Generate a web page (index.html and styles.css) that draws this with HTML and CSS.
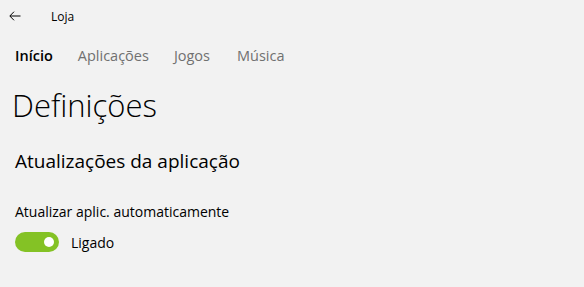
FILE: index.html
```html
<!DOCTYPE html>
<html lang="pt">

<head>
  <meta charset="UTF-8" />
  <title>Loja</title>
  <link rel="stylesheet" href="styles.css">
</head>

<body>
  <div class="app">

    <!-- barra de título -->
    <div class="titlebar">
      <span class="back">
        <svg width="12" height="10" viewBox="0 0 12 10">
          <path d="M11.5 5H1M5 0.7L0.8 5 5 9.3" fill="none" stroke="#000" stroke-width="1" />
        </svg>
      </span>
      <span class="title">Loja</span>
    </div>

    <!-- navegação -->
    <ul class="tabs">
      <li class="active">Início</li>
      <li>Aplicações</li>
      <li>Jogos</li>
      <li>Música</li>
    </ul>

    <h1 class="page-title">Definições</h1>

    <h2 class="section-title">Atualizações da aplicação</h2>

    <div class="setting">
      <p class="label">Atualizar aplic. automaticamente</p>
      <div class="toggle-row">
        <span class="toggle"><span class="knob"></span></span>
        <span class="state">Ligado</span>
      </div>
    </div>

  </div>
</body>

</html>
```

FILE: styles.css
```css
* {
  margin: 0;
  padding: 0;
}

html,
body {
  background: #f2f2f2;
}

body {
  font-family: "Open Sans", "Noto Sans", sans-serif;
  color: #000;
}

ul {
  list-style: none;
}

.app {
  width: 584px;
  height: 287px;
}

.titlebar {
  height: 32px;
  display: flex;
  align-items: center;
}

.titlebar .back {
  width: 48px;
  padding-left: 9px;
  display: flex;
  align-items: center;
  box-sizing: border-box;
}

.titlebar .title {
  padding-left: 3px;
  font-size: 12px;
}

.tabs {
  display: flex;
  gap: 25px;
  padding-left: 15px;
  margin-top: 13px;
  font-size: 14.5px;
  line-height: 22px;
  color: #707070;
}

.tabs .active {
  color: #000;
  font-weight: 600;
}

.tabs li:last-child {
  margin-left: 2px;
}

.page-title {
  font-size: 31px;
  font-weight: 300;
  line-height: 44px;
  padding-left: 12px;
  margin-top: 16px;
}

.section-title {
  font-size: 19px;
  font-weight: 400;
  line-height: 28px;
  padding-left: 15px;
  margin-top: 20px;
}

.setting {
  padding-left: 15px;
  margin-top: 27px;
}

.setting .label {
  font-size: 14px;
  line-height: 20px;
}

.toggle-row {
  display: flex;
  align-items: center;
  gap: 12px;
  margin-top: 10px;
}

.toggle {
  width: 44px;
  height: 20px;
  border-radius: 10px;
  background: #84c225;
  display: flex;
  align-items: center;
  justify-content: flex-end;
  padding-right: 5px;
  box-sizing: border-box;
}

.toggle .knob {
  width: 10px;
  height: 10px;
  border-radius: 50%;
  background: #fff;
}

.state {
  font-size: 14px;
}
```
